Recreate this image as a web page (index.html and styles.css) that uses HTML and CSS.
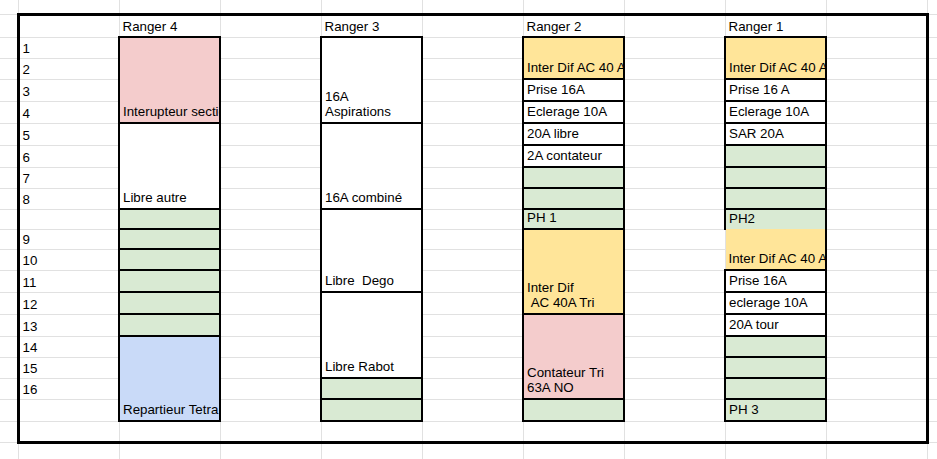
FILE: index.html
```html
<!DOCTYPE html>
<html lang="fr">
<head>
<meta charset="utf-8">
<title>Rangers</title>
<link rel="stylesheet" href="styles.css">
</head>
<body>
<table class="sheet">
<colgroup>
<col class="c-edge"><col class="c"><col class="c"><col class="c"><col class="c"><col class="c"><col class="c"><col class="c"><col class="c"><col class="c"><col class="c-rest">
</colgroup>
<tbody>
<tr class="h14 first"><td></td><td></td><td></td><td></td><td></td><td></td><td></td><td></td><td></td><td></td><td></td></tr>
<tr class="h23"><td></td><td class="ft fl"></td><td class="ft">Ranger 4</td><td class="ft"></td><td class="ft">Ranger 3</td><td class="ft"></td><td class="ft">Ranger 2</td><td class="ft"></td><td class="ft">Ranger 1</td><td class="ft fr"></td><td></td></tr>
<tr class="h21"><td></td><td class="fl">1</td><td class="b pink" rowspan="4">Interupteur section</td><td></td><td class="b" rowspan="4">16A<br>Aspirations</td><td></td><td class="b orange" rowspan="2">Inter Dif AC 40 A</td><td></td><td class="b orange" rowspan="2">Inter Dif AC 40 A</td><td class="fr"></td><td></td></tr>
<tr class="h21"><td></td><td class="fl">2</td><td></td><td></td><td></td><td class="fr"></td><td></td></tr>
<tr class="h22"><td></td><td class="fl">3</td><td></td><td></td><td class="b">Prise 16A</td><td></td><td class="b">Prise 16 A</td><td class="fr"></td><td></td></tr>
<tr class="h22"><td></td><td class="fl">4</td><td></td><td></td><td class="b">Eclerage 10A</td><td></td><td class="b">Eclerage 10A</td><td class="fr"></td><td></td></tr>
<tr class="h22"><td></td><td class="fl">5</td><td class="b" rowspan="4">Libre autre</td><td></td><td class="b" rowspan="4">16A combiné</td><td></td><td class="b">20A libre</td><td></td><td class="b">SAR 20A</td><td class="fr"></td><td></td></tr>
<tr class="h22"><td></td><td class="fl">6</td><td></td><td></td><td class="b">2A contateur</td><td></td><td class="b green"></td><td class="fr"></td><td></td></tr>
<tr class="h21"><td></td><td class="fl">7</td><td></td><td></td><td class="b green"></td><td></td><td class="b green"></td><td class="fr"></td><td></td></tr>
<tr class="h21"><td></td><td class="fl">8</td><td></td><td></td><td class="b green"></td><td></td><td class="b green"></td><td class="fr"></td><td></td></tr>
<tr class="h20"><td></td><td class="fl"></td><td class="b green"></td><td></td><td class="b" rowspan="4">Libre&nbsp; Dego</td><td></td><td class="b green">PH 1</td><td></td><td class="b green nob">PH2</td><td class="fr"></td><td></td></tr>
<tr class="h20"><td></td><td class="fl">9</td><td class="b green"></td><td></td><td></td><td class="b orange" rowspan="4">Inter Dif<br>&nbsp;AC 40A Tri</td><td></td><td class="orange open" rowspan="2">Inter Dif AC 40 A</td><td class="fr"></td><td></td></tr>
<tr class="h21"><td></td><td class="fl">10</td><td class="b green"></td><td></td><td></td><td></td><td class="fr"></td><td></td></tr>
<tr class="h22"><td></td><td class="fl">11</td><td class="b green"></td><td></td><td></td><td></td><td class="b">Prise 16A</td><td class="fr"></td><td></td></tr>
<tr class="h22"><td></td><td class="fl">12</td><td class="b green"></td><td></td><td class="b" rowspan="4">Libre Rabot</td><td></td><td></td><td class="b">eclerage 10A</td><td class="fr"></td><td></td></tr>
<tr class="h22"><td></td><td class="fl">13</td><td class="b green"></td><td></td><td></td><td class="b pink" rowspan="4">Contateur Tri<br>63A NO</td><td></td><td class="b">20A tour</td><td class="fr"></td><td></td></tr>
<tr class="h21"><td></td><td class="fl">14</td><td class="b blue" rowspan="4">Repartieur Tetra</td><td></td><td></td><td></td><td class="b green"></td><td class="fr"></td><td></td></tr>
<tr class="h21"><td></td><td class="fl">15</td><td></td><td></td><td></td><td class="b green"></td><td class="fr"></td><td></td></tr>
<tr class="h21"><td></td><td class="fl">16</td><td></td><td class="b green"></td><td></td><td></td><td class="b green"></td><td class="fr"></td><td></td></tr>
<tr class="h22"><td></td><td class="fl"></td><td></td><td class="b green"></td><td></td><td class="b green"></td><td></td><td class="b green">PH 3</td><td class="fr"></td><td></td></tr>
<tr class="h21"><td></td><td class="fl fb"></td><td class="fb"></td><td class="fb"></td><td class="fb"></td><td class="fb"></td><td class="fb"></td><td class="fb"></td><td class="fb"></td><td class="fb fr"></td><td></td></tr>
<tr class="h20"><td></td><td></td><td></td><td></td><td></td><td></td><td></td><td></td><td></td><td></td><td></td></tr>
</tbody>
</table>
</body>
</html>
```
FILE: styles.css
```css
html, body {
  margin: 0;
  padding: 0;
  background: #fff;
  overflow: hidden;
}

body {
  font-family: "Liberation Sans", Arial, sans-serif;
  font-size: 13.33px;
  color: #000;
}

.sheet {
  border-collapse: collapse;
  table-layout: fixed;
  width: 937px;
}

.c-edge { width: 18px; }
.c { width: 101px; }
.c-rest { width: 10px; }

.sheet td {
  border: 1px solid #e1e1e1;
  padding: 0 3px 2px 3px;
  vertical-align: bottom;
  white-space: nowrap;
  overflow: hidden;
  line-height: 15px;
}

.sheet tr.first td { border-top: none; }
.sheet td:first-child { border-left: none; }
.sheet td:last-child { padding: 0; }

.h14 { height: 14px; }
.h20 { height: 20px; }
.h21 { height: 21px; }
.h22 { height: 22px; }
.h23 { height: 23px; }

.sheet td.b {
  border: 2px solid #000;
  padding-bottom: 3px;
}

.sheet td.nob { border-bottom: none; }
.sheet td.open {
  border-right: 2px solid #000;
  border-top: none;
  border-left: none;
  padding-bottom: 3px;
}

.pink { background: #f4cccc; }
.orange { background: #ffe599; }
.green { background: #d9ead3; }
.blue { background: #c9daf8; }

.sheet td.ft { border-top: 3px solid #000; }
.sheet td.fb { border-bottom: 3px solid #000; }
.sheet td.fl { border-left: 3px solid #000; }
.sheet td.fr { border-right: 3px solid #000; }
```
